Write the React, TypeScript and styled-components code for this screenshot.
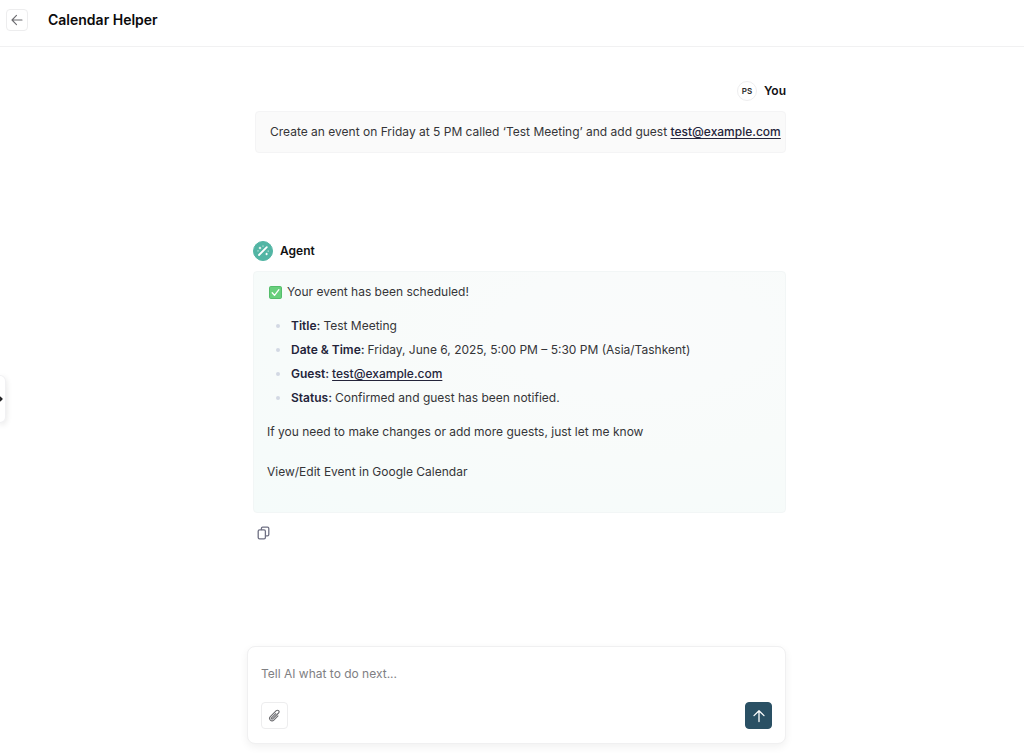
import React from "react";
import styled, { createGlobalStyle } from "styled-components";

const GlobalStyle = createGlobalStyle`
  *, *::before, *::after { box-sizing: border-box; }
  body {
    margin: 0;
    background: #ffffff;
    color: #353538;
    font-family: Inter, "Liberation Sans", sans-serif;
    font-size: 12px;
    line-height: 24px;
  }
  button, input { font: inherit; }
`;

const Page = styled.div`
  display: flex;
  flex-direction: column;
  min-height: 100vh;
`;

const Header = styled.header`
  display: flex;
  align-items: center;
  gap: 20px;
  height: 47px;
  padding: 0 6px 7px;
  border-bottom: 1px solid #f1f1f2;
`;

const Title = styled.h1`
  margin: 0;
  color: #0b0b0c;
  font-size: 14px;
  font-weight: 600;
  line-height: 20px;
`;

const IconButton = styled.button<{ $size: number; $primary?: boolean }>`
  display: flex;
  align-items: center;
  justify-content: center;
  width: ${(p) => p.$size}px;
  height: ${(p) => p.$size}px;
  padding: 0;
  border: 1px solid ${(p) => (p.$primary ? "#2a5064" : "#ededee")};
  border-radius: 4px;
  background: ${(p) => (p.$primary ? "#2a5064" : "#ffffff")};
  color: ${(p) => (p.$primary ? "#ffffff" : "#6b6b6f")};
  cursor: pointer;
`;

const PlainButton = styled.button`
  display: flex;
  align-self: flex-start;
  margin: 13px 0 0 4px;
  padding: 0;
  border: 0;
  background: none;
  color: #6f7083;
  cursor: pointer;
`;

const DrawerHandle = styled.button`
  position: fixed;
  top: 50%;
  left: 0;
  display: flex;
  align-items: center;
  width: 6px;
  height: 48px;
  margin-top: -2px;
  padding: 0;
  border: 1px solid #f1f1f3;
  border-left: 0;
  border-radius: 0 6px 6px 0;
  background: #ffffff;
  box-shadow: 0 2px 6px rgba(0, 0, 0, 0.12);
  color: #222224;
  cursor: pointer;
`;

const Main = styled.main`
  display: flex;
  flex: 1;
  flex-direction: column;
  align-items: center;
  padding: 34px 0 9px 9px;
`;

const Column = styled.div`
  display: flex;
  flex: 1;
  flex-direction: column;
  width: 100%;
  max-width: 539px;
`;

const Thread = styled.div`
  display: flex;
  flex: 1;
  flex-direction: column;
  gap: 88px;
  padding: 0 0 32px 6px;
`;

const Message = styled.article`
  display: flex;
  flex-direction: column;
`;

const Author = styled.div<{ $end?: boolean }>`
  display: flex;
  align-items: center;
  justify-content: ${(p) => (p.$end ? "flex-end" : "flex-start")};
  gap: 7px;
  height: 20px;
  margin-bottom: 10px;
  color: #111113;
  font-weight: 600;
`;

const Avatar = styled.span<{ $agent?: boolean }>`
  display: flex;
  align-items: center;
  justify-content: center;
  width: 20px;
  height: 20px;
  border: 1px solid ${(p) => (p.$agent ? "#52b5a4" : "#eeeeef")};
  border-radius: 50%;
  background: ${(p) => (p.$agent ? "#52b5a4" : "#ffffff")};
  color: ${(p) => (p.$agent ? "#ffffff" : "#2a2a2c")};
  font-size: 8px;
  line-height: 10px;
`;

const UserBubble = styled.p`
  margin: 0 0 0 2px;
  padding: 8px 3px 8px 14px;
  border: 1px solid #f4f4f5;
  border-radius: 4px;
  background: #fafafa;
`;

const AgentBubble = styled.div`
  padding: 8px 13px 12px;
  border: 1px solid #f2f6f6;
  border-radius: 4px;
  background: radial-gradient(ellipse at 71% 25%, #fafbfb 0%, #f9fbfb 24%, #f8fbfa 50%, #f5fbfa 100%);
`;

const Line = styled.p`
  display: flex;
  align-items: center;
  gap: 5px;
  margin: 0;
  padding-left: 2px;
`;

const Facts = styled.ul`
  margin: 10px 0;
  padding: 0;
  list-style: none;
`;

const Fact = styled.li`
  display: flex;
  align-items: center;
  gap: 3px;
  padding-left: 9px;

  &::before {
    content: "";
    width: 4px;
    height: 4px;
    margin-right: 8px;
    border-radius: 50%;
    background: #d3d8e3;
  }
`;

const Label = styled.strong`
  color: #24243a;
  font-weight: 600;
`;

const MailLink = styled.a`
  color: #24243a;
  font-weight: 500;
  text-decoration: underline;
  text-underline-offset: 2px;
`;

const Paragraph = styled.p`
  margin: 0 0 16px;
`;

const Composer = styled.form`
  display: flex;
  flex-direction: column;
  gap: 16px;
  padding: 15px 13px 13px;
  border: 1px solid #f0f0f1;
  border-radius: 8px;
  background: #ffffff;
  box-shadow: 0 3px 8px rgba(0, 0, 0, 0.06);
`;

const Prompt = styled.input`
  width: 100%;
  height: 24px;
  padding: 0;
  border: 0;
  outline: 0;
  background: transparent;
  color: #3a3a3c;

  &::placeholder {
    color: #808083;
    opacity: 1;
  }
`;

const Actions = styled.div`
  display: flex;
  justify-content: space-between;
  padding-bottom: 1px;
`;

const stroke = {
  fill: "none",
  stroke: "currentColor",
  strokeLinecap: "round" as const,
  strokeLinejoin: "round" as const,
};

const ArrowLeftIcon = () => (
  <svg width="12" height="12" viewBox="0 0 12 12" strokeWidth="1.1" {...stroke} aria-hidden="true">
    <path d="M11 6H1M5.5 1.4 1 6l4.5 4.6" />
  </svg>
);

const ArrowUpIcon = () => (
  <svg width="14" height="14" viewBox="0 0 14 14" strokeWidth="1.3" {...stroke} aria-hidden="true">
    <path d="M7 12.6V1.8M2 6.6l5-4.9 5 4.9" />
  </svg>
);

const PaperclipIcon = () => (
  <svg width="13" height="13" viewBox="0 0 24 24" strokeWidth="2" {...stroke} aria-hidden="true">
    <path d="m18.375 12.739-7.693 7.693a4.5 4.5 0 0 1-6.364-6.364l10.94-10.94A3 3 0 1 1 19.5 7.372L8.552 18.32m.009-.01-.01.01m5.699-9.941-7.81 7.81a1.5 1.5 0 0 0 2.112 2.13" />
  </svg>
);

const CopyIcon = () => (
  <svg width="13" height="14" viewBox="0 0 13 14" strokeWidth="1.3" {...stroke} aria-hidden="true">
    <rect x="1.2" y="3.8" width="7.2" height="9" rx="1.4" />
    <path d="M4.4 3.6V2.4A1.3 1.3 0 0 1 5.7 1.1h4.8a1.3 1.3 0 0 1 1.3 1.3v6.2a1.3 1.3 0 0 1-1.3 1.3H8.6" />
  </svg>
);

const WandIcon = () => (
  <svg width="14" height="14" viewBox="0 0 14 14" {...stroke} aria-hidden="true">
    <path d="M3 11 10.8 3.2" strokeWidth="1.8" />
    <path d="M4 3.2v1.6M3.2 4h1.6M10.6 9.2v1.6M9.8 10h1.6M7 2v.2M2 6.8v.2M12.2 7v.2" strokeWidth="1" />
  </svg>
);

const CheckEmoji = () => (
  <svg width="13" height="13" viewBox="0 0 13 13" role="img" aria-label="Done">
    <rect x="0.5" y="0.5" width="12" height="12" rx="1.2" fill="#68cf7c" stroke="#54bd6b" />
    <path d="m3.2 6.8 2.3 2.5 4.4-5.6" fill="none" stroke="#ffffff" strokeWidth="1.3" strokeLinecap="round" strokeLinejoin="round" />
  </svg>
);

const HandleIcon = () => (
  <svg width="3" height="8" viewBox="0 0 3 8" strokeWidth="1.8" {...stroke} aria-hidden="true">
    <path d="M-1 1.5 1.7 4-1 6.5" />
  </svg>
);

const Mail = () => <MailLink href="mailto:test@example.com">test@example.com</MailLink>;

const facts: { label: string; value: React.ReactNode }[] = [
  { label: "Title:", value: "Test Meeting" },
  { label: "Date & Time:", value: "Friday, June 6, 2025, 5:00 PM – 5:30 PM (Asia/Tashkent)" },
  { label: "Guest:", value: <Mail /> },
  { label: "Status:", value: "Confirmed and guest has been notified." },
];

export default function App() {
  return (
    <Page>
      <GlobalStyle />
      <Header>
        <IconButton $size={22} type="button" aria-label="Back">
          <ArrowLeftIcon />
        </IconButton>
        <Title>Calendar Helper</Title>
      </Header>
      <DrawerHandle type="button" aria-label="Open sidebar">
        <HandleIcon />
      </DrawerHandle>
      <Main>
        <Column>
          <Thread>
            <Message>
              <Author $end>
                <Avatar>PS</Avatar>
                You
              </Author>
              <UserBubble>
                Create an event on Friday at 5 PM called ‘Test Meeting’ and add guest <Mail />
              </UserBubble>
            </Message>
            <Message>
              <Author>
                <Avatar $agent>
                  <WandIcon />
                </Avatar>
                Agent
              </Author>
              <AgentBubble>
                <Line>
                  <CheckEmoji />
                  Your event has been scheduled!
                </Line>
                <Facts>
                  {facts.map((fact) => (
                    <Fact key={fact.label}>
                      <Label>{fact.label}</Label>
                      <span>{fact.value}</span>
                    </Fact>
                  ))}
                </Facts>
                <Paragraph>If you need to make changes or add more guests, just let me know</Paragraph>
                <Paragraph>View/Edit Event in Google Calendar</Paragraph>
              </AgentBubble>
              <PlainButton type="button" aria-label="Copy reply">
                <CopyIcon />
              </PlainButton>
            </Message>
          </Thread>
          <Composer onSubmit={(e) => e.preventDefault()}>
            <Prompt type="text" aria-label="Message" placeholder="Tell AI what to do next..." />
            <Actions>
              <IconButton $size={27} type="button" aria-label="Attach file">
                <PaperclipIcon />
              </IconButton>
              <IconButton $size={27} $primary type="submit" aria-label="Send">
                <ArrowUpIcon />
              </IconButton>
            </Actions>
          </Composer>
        </Column>
      </Main>
    </Page>
  );
}
